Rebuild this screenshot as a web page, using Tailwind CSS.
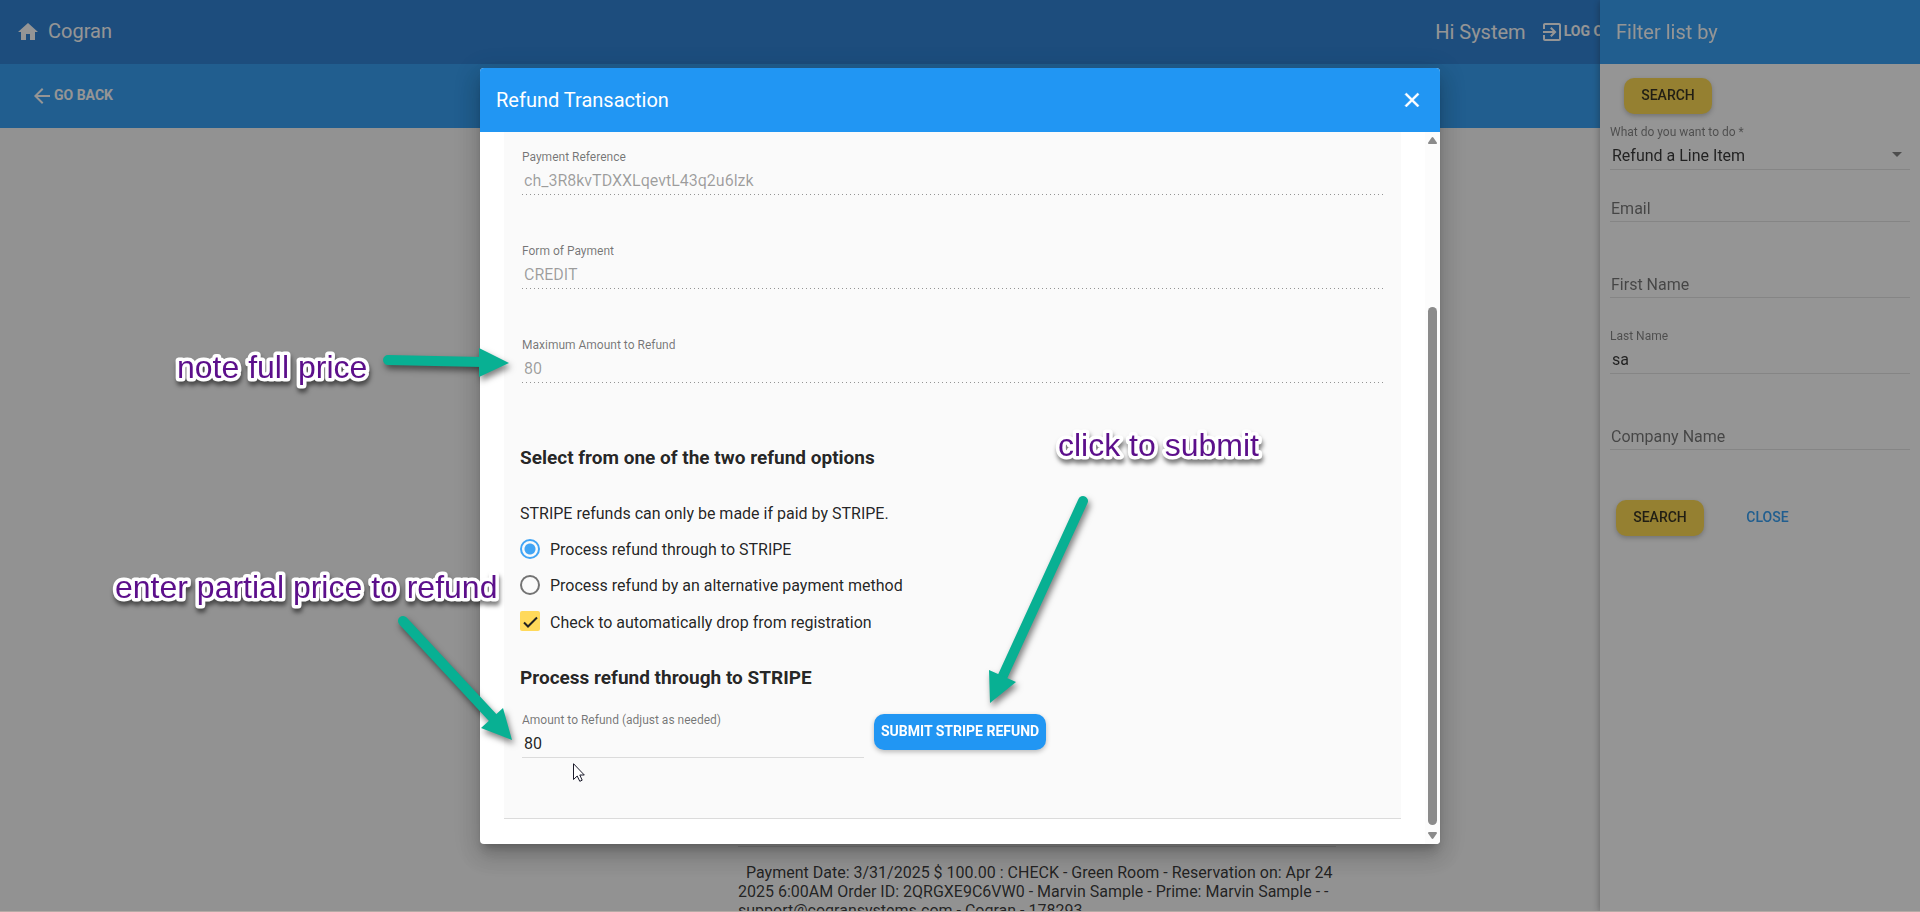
<!DOCTYPE html>
<html lang="en">
<head>
<meta charset="utf-8">
<title>Cogran - Refund Transaction</title>
<script src="https://cdn.jsdelivr.net/npm/@tailwindcss/browser@4"></script>
</head>
<body class="h-screen overflow-hidden bg-[#fafafa] font-[Roboto,sans-serif] text-base text-black/87">

<div class="flex h-full flex-col">
  <header class="flex h-16 shrink-0 items-center bg-[#1976d2] pl-4 text-white">
    <a href="#" class="flex items-center gap-2 text-xl">
      <svg class="size-6" viewBox="0 0 24 24" fill="currentColor" aria-hidden="true"><path d="M10 20v-6h4v6h5v-8h3L12 3 2 12h3v8z"/></svg>
      <span class="pb-[2px]">Cogran</span>
    </a>
    <div class="ml-auto flex items-center gap-[14px] pr-[299px]">
      <span class="text-xl">Hi System</span>
      <button type="button" class="flex items-center text-sm font-bold">
        <svg class="size-6" viewBox="0 0 24 24" fill="currentColor" aria-hidden="true"><path d="M10.09 15.59L11.5 17l5-5-5-5-1.41 1.41L12.67 11H3v2h9.67l-2.58 2.59zM19 3H5c-1.11 0-2 .9-2 2v4h2V5h14v14H5v-4H3v4c0 1.1.89 2 2 2h14c1.1 0 2-.9 2-2V5c0-1.1-.9-2-2-2z"/></svg>
        <span class="pb-[2px]">LOG OUT</span>
      </button>
    </div>
  </header>
  <nav class="flex h-16 shrink-0 items-center bg-[#2196f3] pl-[30px] text-white">
    <button type="button" class="flex items-center text-sm font-bold">
      <svg class="size-6" viewBox="0 0 24 24" fill="currentColor" aria-hidden="true"><path d="M20 11H7.83l5.59-5.59L12 4l-8 8 8 8 1.41-1.41L7.83 13H20v-2z"/></svg>
      <span class="pb-[2px]">GO BACK</span>
    </button>
  </nav>
  <main class="flex min-h-0 flex-1 flex-col justify-end overflow-hidden">
    <div class="mr-[584px] ml-[738px] h-[66px] border-t border-black/12 pt-4 leading-[19px]">
      <p class="indent-2">Payment Date: 3/31/2025 $ 100.00 : CHECK - Green Room - Reservation on: Apr 24 2025 6:00AM Order ID: 2QRGXE9C6VW0 - Marvin Sample - Prime: Marvin Sample - - support@cogransystems.com - Cogran - 178293</p>
    </div>
  </main>
</div>

<aside class="fixed inset-y-0 right-0 w-80 bg-white shadow-[0_1px_8px_rgba(0,0,0,0.4)]">
  <h2 class="flex h-16 items-center bg-[#2196f3] px-4 text-xl text-white">Filter list by</h2>
  <form class="flex flex-col px-[10px] pt-[14px]">
    <button type="button" class="ml-[14px] h-9 w-22 rounded-[10px] bg-[#ffd740] pb-[2px] text-sm font-medium shadow-[0_2px_5px_rgba(0,0,0,0.26)]">SEARCH</button>
    <label for="task" class="mt-[10px] text-xs leading-4 text-black/54">What do you want to do *</label>
    <div class="relative">
      <select id="task" class="block h-[30px] w-full appearance-none border-b border-black/12 pt-[3px] pl-[2px]"><option>Refund a Line Item</option></select>
      <svg class="pointer-events-none absolute top-3 right-2 h-[5px] w-[10px] text-black/54" viewBox="0 0 10 5" fill="currentColor" aria-hidden="true"><path d="M0 0h10L5 5z"/></svg>
    </div>
    <input type="text" aria-label="Email" placeholder="Email" class="mt-[22px] h-[30px] border-b border-black/12 px-px pt-[3px] placeholder:text-black/60">
    <input type="text" aria-label="First Name" placeholder="First Name" class="mt-[46px] h-[30px] border-b border-black/12 px-px pt-[3px] placeholder:text-black/60">
    <label for="last" class="mt-[30px] text-xs leading-4 text-black/54">Last Name</label>
    <input id="last" type="text" value="sa" class="h-[30px] border-b border-black/12 px-[2px] pt-[2px]">
    <input type="text" aria-label="Company Name" placeholder="Company Name" class="mt-[46px] h-[30px] border-b border-black/12 px-px pt-[3px] placeholder:text-black/60">
    <div class="mt-[50px] ml-[6px] flex gap-[22px]">
      <button type="button" class="h-9 w-22 rounded-[10px] bg-[#ffd740] pb-[2px] text-sm font-medium shadow-[0_2px_5px_rgba(0,0,0,0.26)]">SEARCH</button>
      <button type="button" class="h-9 w-[83px] pb-[2px] text-sm font-medium text-[#2196f3]">CLOSE</button>
    </div>
  </form>
</aside>

<div class="fixed inset-0 bg-[#212121]/48"></div>

<div class="fixed inset-0 flex items-center justify-center">
  <section role="dialog" aria-labelledby="dlg" class="flex h-[85%] w-1/2 flex-col overflow-hidden rounded bg-white shadow-[0_7px_8px_-4px_rgba(0,0,0,0.2),0_13px_19px_2px_rgba(0,0,0,0.14),0_5px_24px_4px_rgba(0,0,0,0.12)]">
    <header class="flex h-16 shrink-0 items-center justify-between bg-[#2196f3] px-4 text-white">
      <h2 id="dlg" class="text-xl">Refund Transaction</h2>
      <button type="button" aria-label="Close"><svg class="size-6" viewBox="0 0 24 24" fill="currentColor" stroke="currentColor" stroke-width=".5" aria-hidden="true"><path d="M19 6.41L17.59 5 12 10.59 6.41 5 5 6.41 10.59 12 5 17.59 6.41 19 12 13.41 17.59 19 19 17.59 13.41 12z"/></svg></button>
    </header>
    <div class="flex min-h-0 flex-1">
      <form class="min-w-0 flex-1 px-6 pb-6">
        <div class="border-b border-black/12 bg-[#fafafa] px-4 pt-[17px] pb-[60px]">
          <div class="flex flex-col gap-12 px-[2px]">
            <div class="flex flex-col">
              <label for="ref" class="text-xs leading-4 text-black/54">Payment Reference</label>
              <input id="ref" type="text" disabled value="ch_3R8kvTDXXLqevtL43q2u6lzk" class="h-[29px] px-[2px] pt-[2px] text-black/38">
              <div class="h-px bg-[repeating-linear-gradient(to_right,#949494_0_1px,transparent_1px_4px)]"></div>
            </div>
            <div class="flex flex-col">
              <label for="form" class="text-xs leading-4 text-black/54">Form of Payment</label>
              <input id="form" type="text" disabled value="CREDIT" class="h-[29px] px-[2px] pt-[2px] text-black/38">
              <div class="h-px bg-[repeating-linear-gradient(to_right,#949494_0_1px,transparent_1px_4px)]"></div>
            </div>
            <div class="flex flex-col">
              <label for="max" class="text-xs leading-4 text-black/54">Maximum Amount to Refund</label>
              <input id="max" type="text" disabled value="80" class="h-[29px] px-[2px] pt-[2px] text-black/38">
              <div class="h-px bg-[repeating-linear-gradient(to_right,#949494_0_1px,transparent_1px_4px)]"></div>
            </div>
          </div>
          <h3 class="mt-[63px] text-[19px] leading-6 font-bold">Select from one of the two refund options</h3>
          <p class="mt-8 leading-6">STRIPE refunds can only be made if paid by STRIPE.</p>
          <div class="mt-[5px] flex flex-col">
            <label class="flex h-9 items-center gap-[10px]"><input type="radio" name="method" checked class="size-5 appearance-none rounded-full border-2 border-[#42a5f5] bg-[radial-gradient(circle,#42a5f5_5px,transparent_6px)]"><span class="pt-[2px]">Process refund through to STRIPE</span></label>
            <label class="flex h-9 items-center gap-[10px]"><input type="radio" name="method" class="size-5 appearance-none rounded-full border-2 border-black/54"><span class="pt-[2px]">Process refund by an alternative payment method</span></label>
            <label class="flex h-9 items-center gap-[10px]">
              <span class="grid size-5">
                <input type="checkbox" checked class="col-start-1 row-start-1 size-5 appearance-none rounded-[2px] bg-[#ffd95a]">
                <svg class="pointer-events-none col-start-1 row-start-1 size-5" viewBox="0 0 20 20" fill="none" stroke="#212121" stroke-width="2" aria-hidden="true"><path d="M4 11.5l4 4L17 6.500"/></svg>
              </span>
              <span class="pt-[3px]">Check to automatically drop from registration</span>
            </label>
          </div>
          <h3 class="mt-[27px] text-[19px] leading-6 font-bold">Process refund through to STRIPE</h3>
          <div class="mt-[22px] flex items-start gap-[10px] pl-[2px]">
            <div class="flex w-[342px] flex-col">
              <label for="amt" class="text-xs leading-4 text-black/54">Amount to Refund (adjust as needed)</label>
              <input id="amt" type="text" value="80" class="h-[30px] border-b border-black/12 px-[2px] pt-[2px]">
            </div>
            <button type="button" class="mt-[2px] h-9 rounded-[10px] bg-[#2196f3] px-[7px] pb-[2px] text-sm font-bold text-white shadow-[0_2px_5px_rgba(0,0,0,0.26)]">SUBMIT STRIPE REFUND</button>
          </div>
        </div>
      </form>
      <div class="flex w-[15px] shrink-0 flex-col items-center bg-[#fcfcfc] py-[5px]" aria-hidden="true">
        <svg class="h-[7px] w-[9px]" viewBox="0 0 9 7" fill="#8b8b8b"><path d="M3.500.7Q4.500-.5 5.500.7L8.800 5.500Q9.200 7 8 7H1Q-.2 7 .2 5.500z"/></svg>
        <div class="mt-[163px] w-[9px] flex-1 rounded-full bg-[#8b8b8b]"></div>
        <svg class="mt-[7px] h-[7px] w-[9px]" viewBox="0 0 9 7" fill="#8b8b8b"><path d="M3.500 6.300Q4.500 7.500 5.500 6.300L8.800 1.500Q9.200 0 8 0H1Q-.2 0 .2 1.500z"/></svg>
      </div>
    </div>
  </section>
</div>

<div class="fixed inset-x-0 bottom-0 h-px bg-[#b5aba6]"></div>

<!-- Callouts drawn over the page -->
<div class="pointer-events-none fixed inset-0">
  <svg class="absolute top-0 left-0 h-[912px] w-[1920px] drop-shadow-[2px_4px_3px_rgba(0,0,0,0.5)]" viewBox="0 0 1920 912" fill="#08b093" stroke="#08b093" aria-hidden="true">
    <path d="M388 360L482 362M403 621L494 719M1083 501L1001 680" stroke-width="10" stroke-linecap="round"/>
    <path d="M479 348L509 363L479 377zM503 708L512 740L481 728zM989 670L990 703L1016 682z" stroke="none"/>
  </svg>
  <svg class="absolute top-0 left-0 h-[912px] w-[1920px] font-['Liberation_Sans',sans-serif] text-[32px] [paint-order:stroke_fill] drop-shadow-[1px_4px_2px_rgba(0,0,0,0.5)]" viewBox="0 0 1920 912" fill="#5c0f8b" stroke="#fff" stroke-width="7" stroke-linejoin="round">
    <text x="177" y="378">note full price</text>
    <text x="115" y="598">enter partial price to refund</text>
    <text x="1058" y="456">click to submit</text>
  </svg>
  <svg class="absolute top-[763px] left-[573px] h-[19px] w-[12px]" viewBox="0 0 12 19" fill="#fff" stroke="#1a1a2a" aria-hidden="true"><path d="M.5.700V16.500L4.200 13L6.800 18.300L9.200 17.200L6.800 12H11.300z"/></svg>
</div>
</body>
</html>
